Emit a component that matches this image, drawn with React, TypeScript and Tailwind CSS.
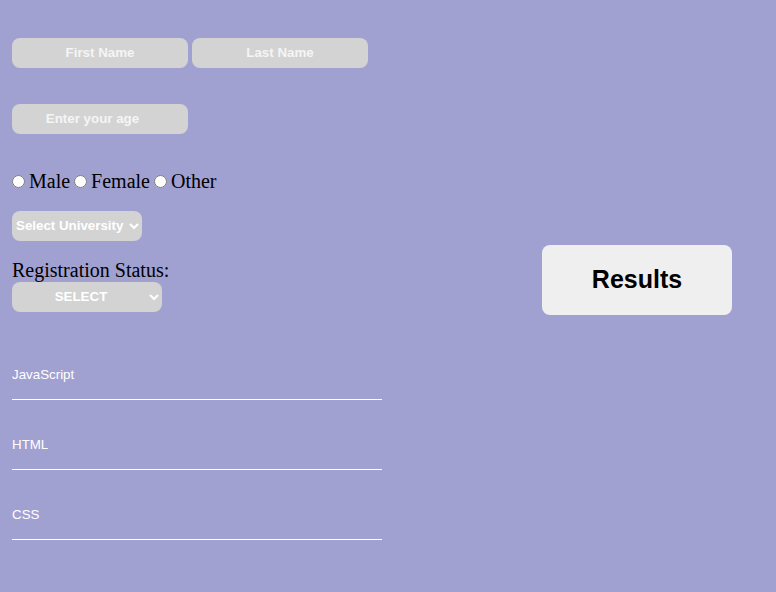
import { useState } from 'react'

const skills = ['JavaScript', 'HTML', 'CSS']

export default function App() {
  const [gender, setGender] = useState('')

  return (
    <div className="min-h-[592px] w-full bg-[#a1a1d1] flex font-['Liberation_Sans',Arial,sans-serif]">
      {/* Form column */}
      <div className="w-[382px] pl-3 pt-[38px] shrink-0">
        <div className="flex gap-1">
          <input
            placeholder="First Name"
            className="w-[176px] h-[30px] pb-[2px] rounded-lg bg-[#d3d3d3] text-center text-[13.33px] font-bold text-white placeholder:text-[#f5f5f5] outline-none"
          />
          <input
            placeholder="Last Name"
            className="w-[176px] h-[30px] pb-[2px] rounded-lg bg-[#d3d3d3] text-center text-[13.33px] font-bold text-white placeholder:text-[#f5f5f5] outline-none"
          />
        </div>

        <input
          type="number"
          placeholder="Enter your age"
          className="mt-9 block w-[176px] h-[30px] pb-[2px] rounded-lg bg-[#d3d3d3] text-center text-[13.33px] font-bold text-white placeholder:text-[#f5f5f5] outline-none"
        />

        <div className="mt-[36px] flex items-center h-[22px] font-['Liberation_Serif','Times_New_Roman',serif] text-[20px] text-black">
          {['Male', 'Female', 'Other'].map((g) => (
            <label key={g} className="flex items-center">
              <input
                type="radio"
                name="gender"
                checked={gender === g}
                onChange={() => setGender(g)}
                className="w-[13px] h-[13px] mr-[4px] ml-0"
              />
              <span className="mr-[4px]">{g}</span>
            </label>
          ))}
        </div>

        <select className="mt-[19px] block w-[130px] h-[30px] pb-[2px] rounded-lg bg-[#d3d3d3] text-[13.33px] font-bold text-white pl-0 outline-none">
          <option>Select University</option>
        </select>

        <div className="mt-[18px] mb-[1px] font-['Liberation_Serif','Times_New_Roman',serif] text-[20px] leading-[22px] text-black">
          Registration Status:
        </div>
        <select className="block w-[150px] h-[30px] pb-[2px] rounded-lg bg-[#d3d3d3] text-[13.33px] font-bold text-white text-center outline-none">
          <option>SELECT</option>
        </select>

        <div className="mt-[48px] w-[370px]">
          {skills.map((s, i) => (
            <div
              key={s}
              className={`border-b border-white h-[40px] flex items-center text-[13.33px] text-white ${i > 0 ? 'mt-[30px]' : ''}`}
            >
              <span className="-mt-[9px]">{s}</span>
            </div>
          ))}
        </div>
      </div>

      {/* Results */}
      <div className="flex-1 pt-[245px] pl-[160px]">
        <button className="w-[190px] h-[70px] rounded-lg bg-[#efefef] text-[25px] font-bold text-black leading-[28px] pb-[2px]">
          Results
        </button>
      </div>
    </div>
  )
}
